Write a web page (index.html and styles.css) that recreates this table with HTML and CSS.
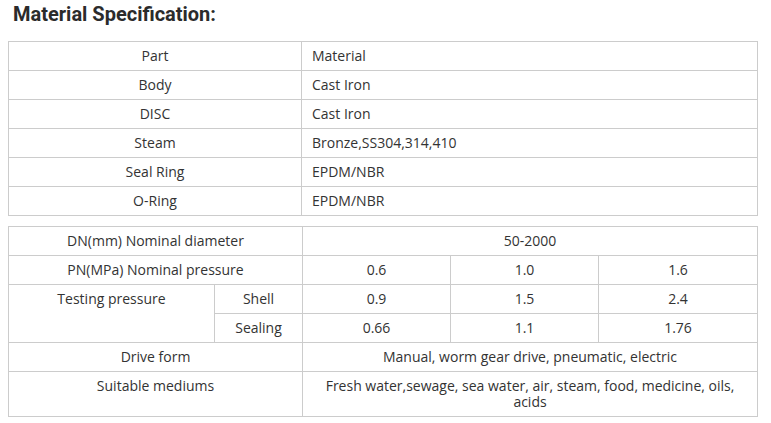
FILE: index.html
```html
<!DOCTYPE html>
<html>
<head>
<meta charset="utf-8">
<link rel="stylesheet" href="styles.css">
</head>
<body>
<h2 class="title">Material Specification:</h2>
<table class="spec spec-material">
  <colgroup><col class="c-part"><col class="c-mat"></colgroup>
  <tr><td>Part</td><td class="left">Material</td></tr>
  <tr><td>Body</td><td class="left">Cast Iron</td></tr>
  <tr><td>DISC</td><td class="left">Cast Iron</td></tr>
  <tr><td>Steam</td><td class="left">Bronze,SS304,314,410</td></tr>
  <tr><td>Seal Ring</td><td class="left">EPDM/NBR</td></tr>
  <tr><td>O-Ring</td><td class="left">EPDM/NBR</td></tr>
</table>
<table class="spec spec-data">
  <colgroup><col class="c-a"><col class="c-b"><col class="c-c"><col class="c-d"><col class="c-e"></colgroup>
  <tr><td colspan="2">DN(mm) Nominal diameter</td><td colspan="3">50-2000</td></tr>
  <tr><td colspan="2">PN(MPa) Nominal pressure</td><td>0.6</td><td>1.0</td><td>1.6</td></tr>
  <tr><td rowspan="2" class="top">Testing pressure</td><td>Shell</td><td>0.9</td><td>1.5</td><td>2.4</td></tr>
  <tr><td>Sealing</td><td>0.66</td><td>1.1</td><td>1.76</td></tr>
  <tr><td colspan="2">Drive form</td><td colspan="3">Manual, worm gear drive, pneumatic, electric</td></tr>
  <tr><td colspan="2" class="top">Suitable mediums</td><td colspan="3">Fresh water,sewage, sea water, air, steam, food, medicine, oils, acids</td></tr>
</table>
</body>
</html>
```
FILE: styles.css
```css
html, body {
  margin: 0;
  background: #ffffff;
}
body {
  padding: 0 8px;
  font-family: "Open Sans", "Liberation Sans", sans-serif;
  font-size: 14px;
  color: #333333;
}
.title {
  margin: 0;
  padding: 1px 0 0 5px;
  height: 41px;
  box-sizing: border-box;
  font-family: Roboto, "Liberation Sans", sans-serif;
  font-weight: 700;
  font-size: 20px;
  line-height: 26px;
  color: #2b2b2b;
}
.spec {
  width: 750px;
  border-collapse: collapse;
  table-layout: fixed;
  margin: 0 0 10px 0;
}
.spec td {
  border: 1px solid #cccccc;
  padding: 6px 10px;
  text-align: center;
  vertical-align: middle;
  line-height: 16px;
}
.spec td.left { text-align: left; }
.spec td.top { vertical-align: top; }
.c-part { width: 293px; }
.c-a { width: 206px; }
.c-b { width: 88px; }
.c-c { width: 148px; }
.c-d { width: 148px; }
```
